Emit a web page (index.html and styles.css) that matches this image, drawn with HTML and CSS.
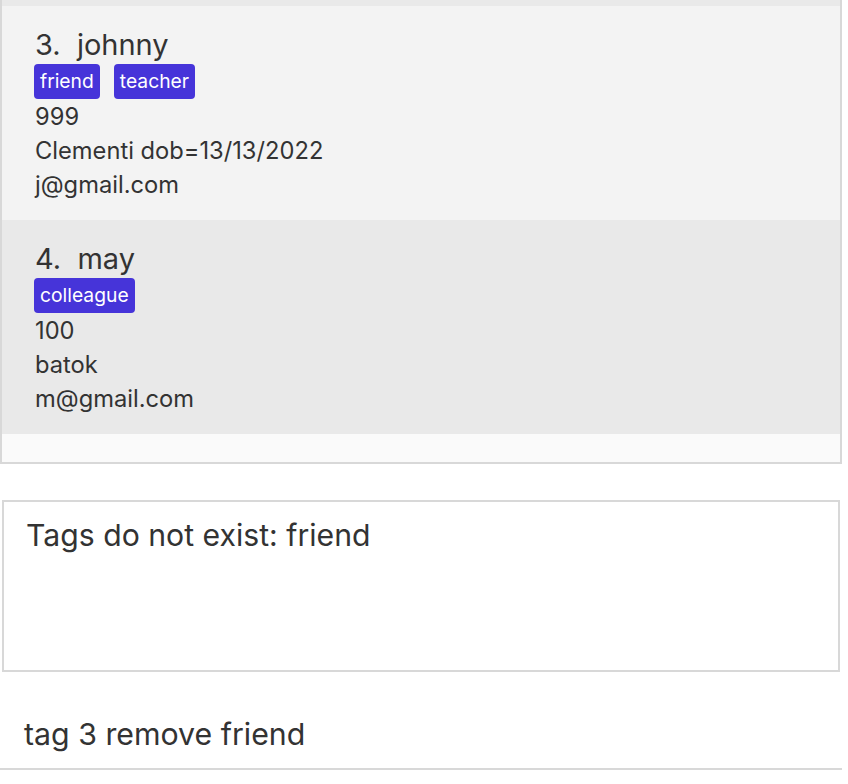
FILE: index.html
```html
<!DOCTYPE html>
<html>
<head>
<meta charset="utf-8">
<link rel="stylesheet" href="styles.css">
</head>
<body>
<div class="app">
  <div class="list">
    <div class="card card-even card-peek"></div>
    <div class="card card-odd">
      <div class="name">3.&nbsp; johnny</div>
      <div class="tags"><span class="tag">friend</span><span class="tag">teacher</span></div>
      <div class="line">999</div>
      <div class="line">Clementi dob=13/13/2022</div>
      <div class="line">j@gmail.com</div>
    </div>
    <div class="card card-even">
      <div class="name">4.&nbsp; may</div>
      <div class="tags"><span class="tag">colleague</span></div>
      <div class="line">100</div>
      <div class="line">batok</div>
      <div class="line">m@gmail.com</div>
    </div>
    <div class="filler"></div>
  </div>
  <div class="result-wrap">
    <div class="result">Tags do not exist: friend</div>
  </div>
  <div class="command">tag 3 remove friend</div>
</div>
</body>
</html>
```

FILE: styles.css
```css
html, body {
  margin: 0;
  padding: 0;
  background: #ffffff;
}
body {
  font-family: Inter, "Noto Sans", sans-serif;
  color: #333333;
}
.app {
  width: 842px;
  display: flex;
  flex-direction: column;
}
.list {
  border: 2px solid #d8d8d8;
  border-top: none;
  display: flex;
  flex-direction: column;
}
.card {
  padding: 21px 0 18px 33px;
  height: 214px;
  box-sizing: border-box;
  display: flex;
  flex-direction: column;
}
.card-peek {
  height: 6px;
  padding: 0;
}
.card-odd { background: #f3f3f3; }
.card-even { background: #e9e9e9; }
.name {
  font-size: 29px;
  line-height: 36px;
  white-space: pre;
}
.tags {
  display: flex;
  gap: 14px;
  margin-top: 1px;
  margin-left: -1px;
  margin-bottom: 1px;
}
.tag {
  background: #4634d9;
  color: #ffffff;
  font-size: 19.3px;
  line-height: 25px;
  padding: 5px 6px;
  border-radius: 4px;
}
.line {
  font-size: 23.7px;
  line-height: 34px;
}
.filler {
  height: 28px;
  background: #fafafa;
}
.result-wrap {
  padding: 36px 2px 0 2px;
}
.result {
  height: 172px;
  box-sizing: border-box;
  border: 2px solid #d8d8d8;
  padding: 15px 22px;
  font-size: 30.2px;
  line-height: 36px;
}
.command {
  height: 98px;
  box-sizing: border-box;
  border-bottom: 2px solid #d8d8d8;
  padding: 44px 24px 0 24px;
  font-size: 30.3px;
  line-height: 36px;
}
```
